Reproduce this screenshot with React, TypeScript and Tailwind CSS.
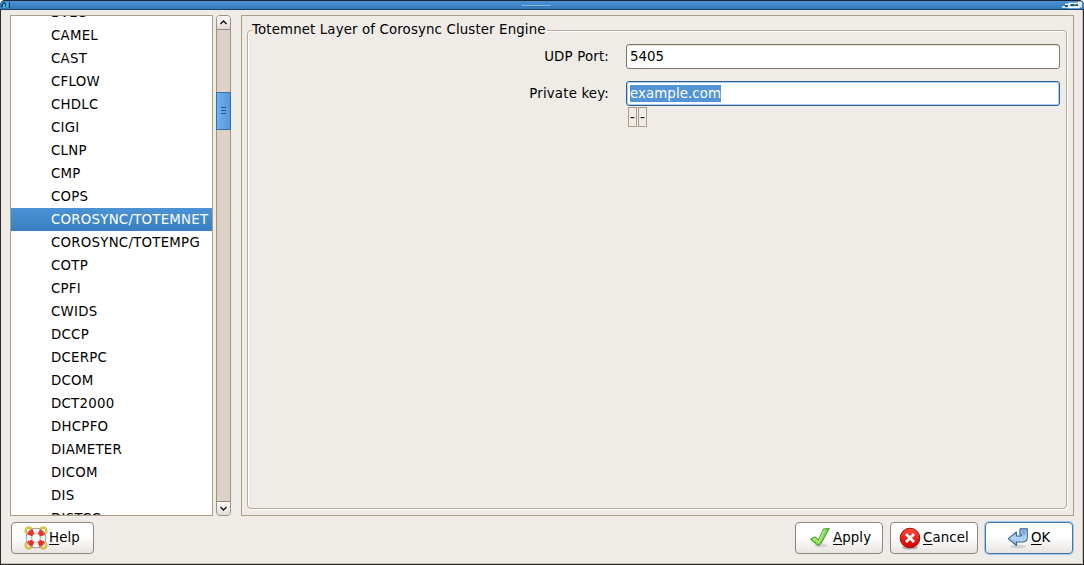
import type { ReactNode } from 'react';

const protocols = ['BVLC', 'CAMEL', 'CAST', 'CFLOW', 'CHDLC', 'CIGI', 'CLNP', 'CMP', 'COPS', 'COROSYNC/TOTEMNET', 'COROSYNC/TOTEMPG', 'COTP', 'CPFI', 'CWIDS', 'DCCP', 'DCERPC', 'DCOM', 'DCT2000', 'DHCPFO', 'DIAMETER', 'DICOM', 'DIS', 'DISTCC'];

function TitleBar() {
  return (
    <header className="-mx-px flex h-[10px] shrink-0 items-start justify-between rounded-t-[5px] border-t border-b border-t-[#1c2733] border-b-[#1d3f63] bg-linear-to-b from-[#4a93d6] to-[#3679b9]">
      <svg className="h-2 w-3" viewBox="0 0 12 8">
        <path d="M1.5 6C2 3 3 2 5 2M6 2v3" stroke="#10395a" strokeWidth="1.5" fill="none" />
        <path d="M4 7V3M7 1.5v5" stroke="#37b4e6" strokeWidth="2" />
        <path d="M9.5 1v6" stroke="#10395a" />
      </svg>
      <svg className="mt-[3px] h-[3px] w-[30px]" viewBox="0 0 30 3">
        <path d="M0 1.5h29" stroke="#9cc5ea" strokeDasharray="2 .5" />
        <path d="M1 2.5h29" stroke="#2d6ba6" strokeDasharray="1 1" />
      </svg>
      <svg className="h-2 w-[22px]" viewBox="0 0 22 8">
        <path d="M0 6h17M3 3.5h3M7 2.5h10v4H7zM16 1.5h3v5" stroke="#fff" strokeWidth="1.6" fill="none" />
        <path d="M3 5h3M9 4h3M14 4h2" stroke="#1c568f" strokeWidth="2" />
      </svg>
    </header>
  );
}

function ProtocolList() {
  return (
    <div className="w-[203px] overflow-hidden border border-[#ac9d86] bg-white">
      <ul className="-mt-[15px] tracking-[0.25px]">
        {protocols.map((name) => (
          <li key={name} className={`h-[23px] pl-10 leading-[23px] whitespace-nowrap ${name === 'COROSYNC/TOTEMNET' ? 'bg-linear-to-b from-[#4b93d5] to-[#397fbf] text-white' : ''}`}>{name}</li>
        ))}
      </ul>
    </div>
  );
}

function Arrow({ down = false }: { down?: boolean }) {
  return (
    <div className={`flex h-[14px] shrink-0 items-center justify-center border-[#91877d] bg-linear-to-b from-white to-[#dedad6] ${down ? 'rounded-b-[3px] border-t' : 'rounded-t-[3px] border-b'}`}>
      <svg className={`h-[5px] w-[7px] ${down ? 'rotate-180' : ''}`} viewBox="0 0 7 5">
        <path d="M.5 4 3.5 1l3 3" fill="none" stroke="#111" strokeWidth="1.4" />
      </svg>
    </div>
  );
}

function Scrollbar() {
  return (
    <div className="ml-[3px] flex w-[15px] flex-col rounded-[4px] border border-[#9f917f] bg-[#ddd2c6]">
      <Arrow />
      <div className="-mx-px mt-[62px] flex h-[38px] flex-col items-center justify-center gap-[2px] border border-[#386fa9] bg-linear-to-r from-[#75b0ea] to-[#5797dc] pb-px">
        <i className="h-px w-[5px] bg-[#24548a]" />
        <i className="h-px w-[5px] bg-[#24548a]" />
        <i className="h-px w-[5px] bg-[#24548a]" />
      </div>
      <div className="flex-1" />
      <Arrow down />
    </div>
  );
}

function Button({ icon, label, className }: { icon: ReactNode; label: string; className: string }) {
  return (
    <button className={`flex h-8 items-center rounded-[4px] border bg-linear-to-b from-white from-45% to-[#e9e4e2] pb-px whitespace-nowrap ${className}`}>
      {icon}
      <span className="ml-px leading-4 tracking-[0.1px]"><span className="underline decoration-1 underline-offset-2">{label[0]}</span>{label.slice(1)}</span>
    </button>
  );
}

const HelpIcon = (
  <svg className="h-6 w-6" viewBox="0 0 24 24">
    <g fill="none" stroke="#b99407" strokeWidth="2.2"><circle cx="4.8" cy="4.8" r="3.2" /><circle cx="19.2" cy="4.8" r="3.2" /><circle cx="4.8" cy="19.2" r="3.2" /><circle cx="19.2" cy="19.2" r="3.2" /></g>
    <g fill="none" stroke="#fff06a" strokeWidth="1"><circle cx="4.8" cy="4.8" r="3.2" /><circle cx="19.2" cy="4.8" r="3.2" /><circle cx="4.8" cy="19.2" r="3.2" /><circle cx="19.2" cy="19.2" r="3.2" /></g>
    <circle cx="12" cy="12" r="7.1" fill="none" stroke="#858782" strokeWidth="6.4" />
    <circle cx="12" cy="12" r="7.1" fill="none" stroke="#f2f2f0" strokeWidth="5" />
    <circle cx="12" cy="12" r="7.1" fill="none" stroke="#ec3030" strokeWidth="5" strokeDasharray="5.576 5.577" strokeDashoffset="-2.788" />
  </svg>
);

const ApplyIcon = (
  <svg className="h-6 w-6" viewBox="0 0 24 24">
    <ellipse cx="13" cy="19.5" rx="7" ry="1.8" fill="#888" opacity=".25" />
    <path d="m2.7 13.3 4.2-2.4 3.5 3.3L15.6 3l5.5-.5-7.7 14.3-3 2.9z" fill="#8edc5b" stroke="#4b9a2c" strokeWidth="1.1" strokeLinejoin="round" />
    <path d="m4.7 13.5 2-1 3.8 3.4L16.3 4" fill="none" stroke="#c4f5a2" strokeWidth="1" />
  </svg>
);

const CancelIcon = (
  <svg className="h-6 w-6" viewBox="0 0 24 24">
    <defs><linearGradient id="red" x2="0" y2="1"><stop stopColor="#ff4c36" /><stop offset="1" stopColor="#cf0000" /></linearGradient></defs>
    <ellipse cx="12" cy="21.5" rx="8" ry="2" fill="#777" opacity=".5" />
    <circle cx="12" cy="12" r="9.8" fill="url(#red)" stroke="#a90b08" />
    <path d="m8 8 8 8m0-8-8 8" stroke="#fff" strokeWidth="2.8" />
  </svg>
);

const OkIcon = (
  <svg className="h-6 w-6" viewBox="0 0 24 24">
    <defs><linearGradient id="blue" x2="0" y2="1"><stop stopColor="#5c8cc2" /><stop offset=".55" stopColor="#b5d4f1" /><stop offset="1" stopColor="#82aeda" /></linearGradient></defs>
    <ellipse cx="12" cy="20.5" rx="8" ry="1.8" fill="#777" opacity=".25" />
    <path d="M2.3 12.6 10.5 6v4h3.7c1 0 1.3-.5 1.3-1.3H14V2.7h7.3v8.7c0 3.2-2.2 4.6-5.2 4.6h-5.6v3.5z" fill="url(#blue)" stroke="#36669d" strokeWidth="1.1" strokeLinejoin="round" />
    <path d="M15.3 7.5V4H20v7.5c0 2.3-1.8 3.2-3.8 3.2h-5M4.3 12.6 9.5 8.3" fill="none" stroke="#c8e0f5" strokeWidth=".7" />
  </svg>
);

export default function App() {
  return (
    <div className="h-[565px] w-[1084px] bg-white font-['DejaVu_Sans',sans-serif] text-[13.333px] text-black">
      <div className="flex h-[565px] flex-col rounded-t-[6px] border-x border-b border-[#2b2723] bg-[#efebe7] shadow-[inset_-1px_-1px_0_#c9c0b4]">
        <TitleBar />
        <main className="mt-[5px] ml-[9px] flex h-[501px]">
          <ProtocolList />
          <Scrollbar />
          <section className="ml-[10px] w-[833px] border border-[#ac9d86] p-[5px]">
            <fieldset className="relative mt-[9px] h-[479px] w-[820px] rounded-[4px] border border-[#b7a899] shadow-[1px_1px_0_#fff,inset_1px_1px_0_#fff]">
              <h1 className="absolute -top-[10px] left-1 bg-[#efebe7] pr-px leading-[18px] tracking-[0.14px] whitespace-nowrap">Totemnet Layer of Corosync Cluster Engine</h1>
              <div className="mt-[13px] grid grid-cols-[361px_434px] gap-x-[17px] gap-y-3 leading-[25px]">
                <label className="text-right tracking-[0.18px]">UDP Port:</label>
                <div className="h-[25px] rounded-[3px] border border-[#81756a] bg-white pl-[3px] leading-[23px] shadow-[inset_0_1px_0_#e5e1dd]">5405</div>
                <label className="text-right tracking-[0.18px]">Private key:</label>
                <div className="flex h-[25px] items-center rounded-[3px] border border-[#315f94] bg-white pl-[3px] shadow-[inset_0_0_0_1px_#a9cff3]"><span className="h-[17px] bg-[#5294d6] leading-[17px] tracking-[0.09px] text-white">example.com</span></div>
              </div>
              <div className="mt-px ml-[380px] flex gap-px">
                <span className="flex h-5 w-[9px] items-center justify-center border border-[#ad9c8c] pt-px">-</span>
                <span className="flex h-5 w-[9px] items-center justify-center border border-[#ad9c8c] pt-px">-</span>
              </div>
            </fieldset>
          </section>
        </main>
        <footer className="mt-[6px] ml-[10px] flex gap-[7px]">
          <Button icon={HelpIcon} label="Help" className="mr-auto w-[83px] border-[#91857d] pl-3" />
          <Button icon={ApplyIcon} label="Apply" className="w-[88px] border-[#91857d] pl-3" />
          <Button icon={CancelIcon} label="Cancel" className="w-[88px] border-[#91857d] pl-[7px]" />
          <Button icon={OkIcon} label="OK" className="mr-[10px] w-[88px] border-[#4476a8] pl-5 shadow-[0_0_0_1px_#9fc8f0]" />
        </footer>
      </div>
    </div>
  );
}
